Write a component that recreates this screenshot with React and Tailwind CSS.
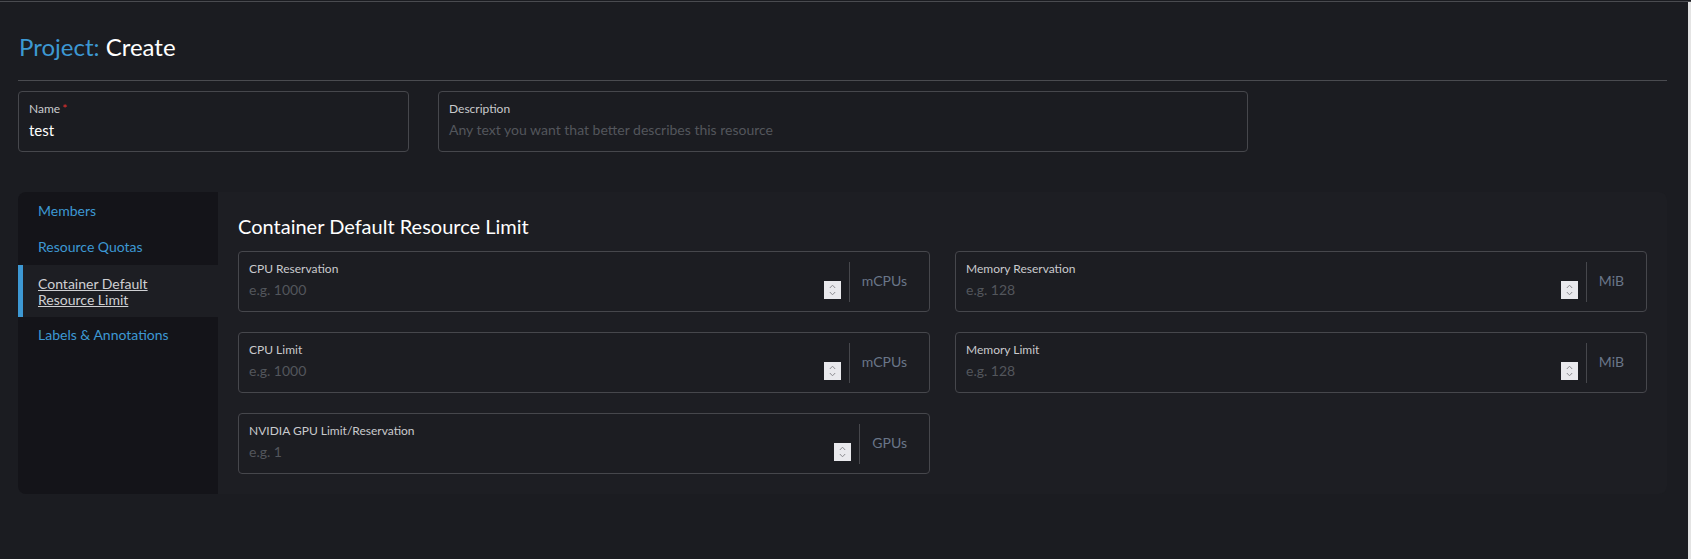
import React from "react";

function Spinner() {
  return (
    <div className="w-[17px] h-[18px] bg-[#e9e9ed] flex flex-col items-center justify-center gap-[2px] shrink-0">
      <svg width="7" height="5" viewBox="0 0 7 5" fill="none">
        <path d="M0.8 4 L3.5 1.2 L6.2 4" stroke="#8b8b90" strokeWidth="1" />
      </svg>
      <svg width="7" height="5" viewBox="0 0 7 5" fill="none">
        <path d="M0.8 1 L3.5 3.8 L6.2 1" stroke="#8b8b90" strokeWidth="1" />
      </svg>
    </div>
  );
}

function NumField({ label, placeholder, suffix }) {
  return (
    <div className="h-[61px] flex border border-[#46474c] rounded-[4px] bg-[#1c1d22]">
      <div className="flex-1 flex flex-col pl-[10px] pr-[8px] pt-[10px]">
        <div className="h-[14px] leading-[14px] text-[12px] text-[#c9cacd]">{label}</div>
        <div className="mt-[3px] h-[22px] flex items-center justify-between">
          <span className="text-[14px] leading-[22px] text-[#53565c]">{placeholder}</span>
          <Spinner />
        </div>
      </div>
      <div className="w-px bg-[#46474c] mt-[10px] mb-[9px]" />
      <div className="pl-3 pr-[22px] flex items-center pb-[2px] text-[14px] text-[#6a7689]">{suffix}</div>
    </div>
  );
}

export default function App() {
  const nav = [
    { t: "Members" },
    { t: "Resource Quotas" },
    { t: "Container Default Resource Limit", active: true },
    { t: "Labels & Annotations" },
  ];
  return (
    <div className="min-h-screen bg-[#1b1c21] flex flex-col font-['Lato','Noto_Sans',sans-serif]">
      <div className="h-px mt-px bg-[#4a4b50]" />
      <div className="flex flex-1">
        <div className="flex-1 pl-[18px] pr-[21px]">
          <h1 className="mt-[30px] text-[24px] leading-[30px] font-normal pl-px">
            <span className="text-[#3d98d3]">Project:</span>
            <span className="text-white"> Create</span>
          </h1>
          <div className="mt-[18px] h-px bg-[#4a4b50]" />
          <div className="mt-[10px] flex gap-[29px]">
            <div className="w-[391px] h-[61px] border border-[#46474c] rounded-[4px] pl-[10px] pt-[10px]">
              <div className="h-[14px] leading-[14px] text-[12px] text-[#c9cacd]">
                Name<span className="text-[#e0302e] ml-[2px]">*</span>
              </div>
              <div className="mt-[3px] h-[22px] leading-[22px] text-[15px] text-white">test</div>
            </div>
            <div className="w-[810px] h-[61px] border border-[#46474c] rounded-[4px] pl-[10px] pt-[10px]">
              <div className="h-[14px] leading-[14px] text-[12px] text-[#c9cacd]">Description</div>
              <div className="mt-[3px] h-[22px] leading-[22px] text-[14px] text-[#53565c]">
                Any text you want that better describes this resource
              </div>
            </div>
          </div>
          <div className="mt-[40px] flex rounded-[8px] overflow-hidden bg-[#1d1e23]">
            <div className="w-[200px] bg-[#141419] flex flex-col pt-px">
              {nav.map((n) =>
                n.active ? (
                  <div
                    key={n.t}
                    className="bg-[#1d1e23] border-l-[5px] border-[#3d98d3] pl-[15px] pr-4 pt-[11px] pb-[9px] text-[14px] leading-[16px] text-[#cfd0d3] underline"
                  >
                    Container Default
                    <br />
                    Resource Limit
                  </div>
                ) : (
                  <div key={n.t} className="pl-5 py-[10px] text-[14px] leading-[16px] text-[#3d98d3]">
                    {n.t}
                  </div>
                )
              )}
            </div>
            <div className="flex-1 p-5">
              <h2 className="text-[20px] leading-[28px] text-white font-normal">Container Default Resource Limit</h2>
              <div className="mt-[11px] grid grid-cols-2 gap-x-[25px] gap-y-[20px]">
                <NumField label="CPU Reservation" placeholder="e.g. 1000" suffix="mCPUs" />
                <NumField label="Memory Reservation" placeholder="e.g. 128" suffix="MiB" />
                <NumField label="CPU Limit" placeholder="e.g. 1000" suffix="mCPUs" />
                <NumField label="Memory Limit" placeholder="e.g. 128" suffix="MiB" />
                <NumField label="NVIDIA GPU Limit/Reservation" placeholder="e.g. 1" suffix="GPUs" />
              </div>
            </div>
          </div>
        </div>
        <div className="w-[3px] bg-[#e4e4e4]" />
      </div>
    </div>
  );
}
